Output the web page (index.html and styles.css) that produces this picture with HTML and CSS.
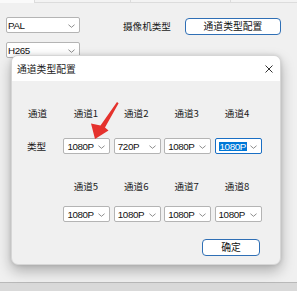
FILE: index.html
```html
<!DOCTYPE html>
<html lang="zh-CN">
<head>
  <meta charset="UTF-8">
  <title>通道类型配置</title>
  <link rel="stylesheet" href="styles.css">
</head>
<body>
  <div class="strip">
    <div class="cell first"></div>
    <div class="cell w96"></div>
    <div class="cell w100"></div>
    <div class="cell"></div>
  </div>

  <div class="top">
    <div class="row1">
      <div class="combo wide"><span>PAL</span><svg class="chev" viewBox="0 0 8 4"><polyline points="0.5,0.5 4,3.5 7.5,0.5"/></svg></div>
      <div class="camlabel">摄像机类型</div>
      <button class="btn config">通道类型配置</button>
    </div>
    <div class="combo wide second"><span>H265</span><svg class="chev" viewBox="0 0 8 4"><polyline points="0.5,0.5 4,3.5 7.5,0.5"/></svg></div>
  </div>

  <div class="footer"></div>

  <div class="dialog">
    <div class="titlebar">
      <span class="title">通道类型配置</span>
      <svg class="close" viewBox="0 0 8 8"><path d="M0.5 0.5 L7.5 7.5 M7.5 0.5 L0.5 7.5"/></svg>
    </div>
    <div class="content">
      <div class="grid heads first-heads">
        <div class="lbl">通道</div>
        <div class="ch">通道1</div>
        <div class="ch">通道2</div>
        <div class="ch">通道3</div>
        <div class="ch">通道4</div>
      </div>
      <div class="grid combos first-combos">
        <div class="lbl">类型</div>
        <div class="combo"><span>1080P</span><svg class="chev" viewBox="0 0 8 4"><polyline points="0.5,0.5 4,3.5 7.5,0.5"/></svg></div>
        <div class="combo"><span>720P</span><svg class="chev" viewBox="0 0 8 4"><polyline points="0.5,0.5 4,3.5 7.5,0.5"/></svg></div>
        <div class="combo"><span>1080P</span><svg class="chev" viewBox="0 0 8 4"><polyline points="0.5,0.5 4,3.5 7.5,0.5"/></svg></div>
        <div class="combo focus"><span class="sel">1080P</span><svg class="chev" viewBox="0 0 8 4"><polyline points="0.5,0.5 4,3.5 7.5,0.5"/></svg></div>
      </div>
      <div class="grid heads second-heads">
        <div class="lbl"></div>
        <div class="ch">通道5</div>
        <div class="ch">通道6</div>
        <div class="ch">通道7</div>
        <div class="ch">通道8</div>
      </div>
      <div class="grid combos second-combos">
        <div class="lbl"></div>
        <div class="combo"><span>1080P</span><svg class="chev" viewBox="0 0 8 4"><polyline points="0.5,0.5 4,3.5 7.5,0.5"/></svg></div>
        <div class="combo"><span>1080P</span><svg class="chev" viewBox="0 0 8 4"><polyline points="0.5,0.5 4,3.5 7.5,0.5"/></svg></div>
        <div class="combo"><span>1080P</span><svg class="chev" viewBox="0 0 8 4"><polyline points="0.5,0.5 4,3.5 7.5,0.5"/></svg></div>
        <div class="combo"><span>1080P</span><svg class="chev" viewBox="0 0 8 4"><polyline points="0.5,0.5 4,3.5 7.5,0.5"/></svg></div>
      </div>
      <div class="actions">
        <button class="btn ok">确定</button>
      </div>
    </div>
  </div>

  <svg class="arrow" viewBox="0 0 40 45">
    <polygon points="32,4 33.6,5.2 20,29.5 23.5,32.5 10,41 6,25.5 15.5,27.5"/>
  </svg>
</body>
</html>
```

FILE: styles.css
```css
body {
  margin: 0;
  width: 297px;
  height: 291px;
  background: #f0f0f0;
  font-family: "Liberation Sans", "Noto Sans CJK SC", sans-serif;
  font-size: 10px;
  color: #1a1a1a;
  overflow: hidden;
  position: relative;
}
.strip {
  display: flex;
  height: 3px;
}
.strip .cell {
  flex: 1;
  border-bottom: 1px solid #dcdcdc;
  border-left: 1px solid #dcdcdc;
  background: #f3f3f3;
}
.strip .first {
  flex: 0 0 34px;
  border: none;
  background: #fafafa;
}
.strip .w96 {
  flex: 0 0 95px;
}
.strip .w100 {
  flex: 0 0 99px;
}
.top {
  padding: 14px 0 0 6px;
}
.row1 {
  display: flex;
  align-items: flex-start;
  height: 18px;
}
.combo {
  position: relative;
  box-sizing: border-box;
  height: 16px;
  background: #fff;
  border: 1px solid #b4b4b4;
  border-radius: 2px;
  display: flex;
  align-items: center;
  padding-left: 3px;
  font-size: 9.8px;
  letter-spacing: -0.4px;
  color: #111;
}
.combo.wide {
  width: 74px;
  padding-left: 1px;
}
.combo.second {
  margin-top: 7px;
}
.chev {
  position: absolute;
  right: 4px;
  top: 6px;
  width: 7px;
  height: 4px;
  fill: none;
  stroke: #707070;
  stroke-width: 0.9;
}
.camlabel {
  margin-left: 43px;
  line-height: 18px;
  font-family: "Noto Sans CJK SC", sans-serif;
  font-size: 9.6px;
}
.btn {
  box-sizing: border-box;
  background: #fff;
  border: 1px solid #2f6fb5;
  border-radius: 4px;
  font-family: "Noto Sans CJK SC", sans-serif;
  font-size: 9.8px;
  color: #111;
  padding: 0;
  line-height: 15px;
}
.config {
  margin: 1px 0 0 14px;
  width: 96px;
  height: 17px;
}
.footer {
  position: absolute;
  left: 0;
  right: 0;
  top: 282px;
  bottom: 0;
  border-top: 1px solid #b9b9b9;
  background: #d9d9d9;
}
.dialog {
  position: absolute;
  left: 11px;
  top: 55px;
  width: 270px;
  height: 210px;
  box-sizing: border-box;
  background: #f0f0f0;
  border: 1px solid #d6d6d6;
  border-radius: 7px;
  box-shadow: 0 6px 14px rgba(0, 0, 0, 0.28), 0 0 4px rgba(0, 0, 0, 0.12);
  overflow: hidden;
}
.titlebar {
  height: 25px;
  background: #fff;
  display: flex;
  align-items: center;
  justify-content: space-between;
  padding: 0 7px 0 5px;
  font-family: "Noto Sans CJK SC", sans-serif;
}
.title {
  font-size: 9.8px;
  padding-top: 1px;
}
.close {
  width: 8px;
  height: 8px;
  fill: none;
  stroke: #333;
  stroke-width: 1;
  margin-top: 1px;
}
.content {
  padding: 25px 0 0 15px;
}
.grid {
  display: grid;
  grid-template-columns: 33px repeat(4, 47px);
  column-gap: 3.4px;
  align-items: center;
}
.heads {
  height: 14px;
  font-family: "Noto Sans CJK SC", sans-serif;
  font-size: 9.6px;
}
.heads .ch {
  text-align: center;
  padding-right: 2px;
}
.lbl {
  font-family: "Noto Sans CJK SC", sans-serif;
  font-size: 9.6px;
  padding-left: 1px;
}
.combos .lbl {
  padding-left: 0;
}
.first-combos {
  margin-top: 18px;
}
.second-heads {
  margin-top: 25px;
}
.second-combos {
  margin-top: 13px;
}
.combo.focus {
  border-color: #1a6fc4;
}
.sel {
  background: #0078d7;
  color: #fff;
  padding: 0 1px;
  line-height: 9px;
}
.actions {
  display: flex;
  justify-content: flex-end;
  padding-right: 20px;
  margin-top: 17px;
}
.ok {
  width: 58px;
  height: 17px;
}
.arrow {
  position: absolute;
  left: 85px;
  top: 98px;
  width: 40px;
  height: 45px;
  fill: #e5322d;
}
```
